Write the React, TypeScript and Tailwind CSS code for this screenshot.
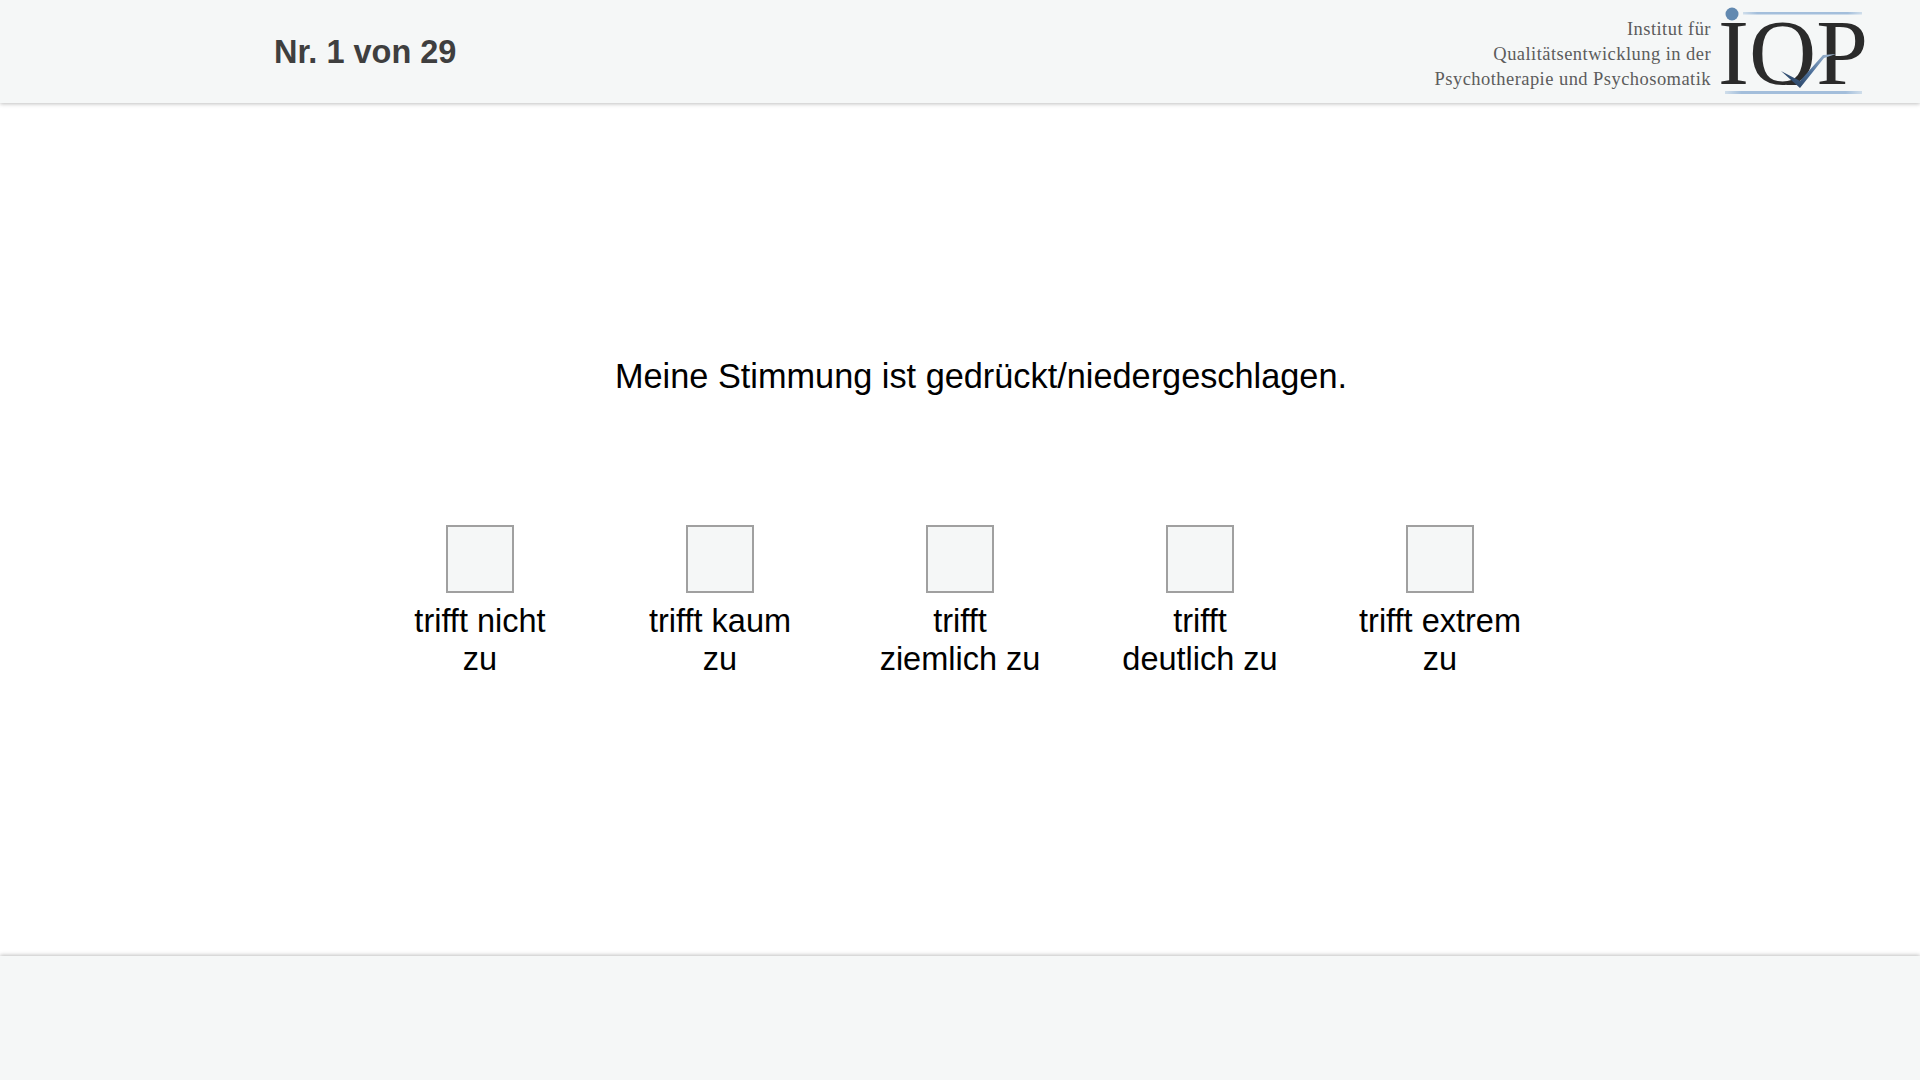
const options = ['trifft nicht zu', 'trifft kaum zu', 'trifft ziemlich zu', 'trifft deutlich zu', 'trifft extrem zu']

const Logo = () => (
  <svg width="150" height="103" viewBox="0 0 150 103" className="shrink-0">
    <defs>
      <linearGradient id="line" x1="0" x2="1" y1="0" y2="0">
        <stop offset="0" stopColor="#a9c4de" stopOpacity="0.5" />
        <stop offset="0.12" stopColor="#a3bedb" />
        <stop offset="0.88" stopColor="#a3bedb" />
        <stop offset="1" stopColor="#a9c4de" stopOpacity="0.5" />
      </linearGradient>
      <linearGradient id="tick" x1="0" x2="1" y1="1" y2="0">
        <stop offset="0" stopColor="#1f3654" />
        <stop offset="0.5" stopColor="#4c6f99" />
        <stop offset="1" stopColor="#a8bfd8" />
      </linearGradient>
      <clipPath id="letters">
        <rect x="0" y="0" width="150" height="85" />
      </clipPath>
    </defs>
    <circle cx="14" cy="14" r="6.5" fill="#6289b0" />
    <rect x="25" y="12" width="119" height="2.5" fill="url(#line)" />
    <rect x="7" y="91" width="137" height="3" fill="url(#line)" />
    <text x="0" y="84" fontSize="93" fill="#2b2b2b" fontFamily="'Liberation Serif', serif" clipPath="url(#letters)">IQP</text>
    <path d="M63 71 L82 81 L105 55 L118 54 L106 58 L82 88 Z" fill="url(#tick)" />
  </svg>
)

export default function App() {
  return (
    <div className="flex h-screen flex-col bg-white font-['Liberation_Sans',Arial,sans-serif] text-black">
      <header className="flex h-[103px] shrink-0 items-center justify-between bg-[#f5f7f7] pr-[52px] pl-[274px] shadow-[0_1px_4px_rgba(0,0,0,0.25)]">
        <h1 className="pt-[2px] text-[32.5px] font-bold text-[#3f3f3f]">Nr. 1 von 29</h1>
        <div className="flex items-start gap-[7px]">
          <p className="pt-[17px] text-right font-['Liberation_Serif',serif] text-[18.5px] leading-[25px] tracking-[0.45px] text-[#5c5c5c]">
            Institut für<br />
            Qualitätsentwicklung in der<br />
            Psychotherapie und Psychosomatik
          </p>
          <Logo />
        </div>
      </header>

      <main className="flex flex-1 flex-col items-center pt-[250px]">
        <p className="ml-[42px] text-[34.3px] leading-[46px]">Meine Stimmung ist gedrückt/niedergeschlagen.</p>
        <div className="mt-[126px] grid w-[1200px] grid-cols-5">
          {options.map((label) => (
            <label key={label} className="flex flex-col items-center">
              <span className="h-[68px] w-[68px] border-2 border-[#a0a0a0] bg-[#f5f7f7]" />
              <span className="mt-[9px] w-[170px] text-center text-[32.5px] leading-[38px]">{label}</span>
            </label>
          ))}
        </div>
      </main>

      <footer className="h-[124px] shrink-0 bg-[#f5f7f7] shadow-[0_-1px_4px_rgba(0,0,0,0.25)]" />
    </div>
  )
}
